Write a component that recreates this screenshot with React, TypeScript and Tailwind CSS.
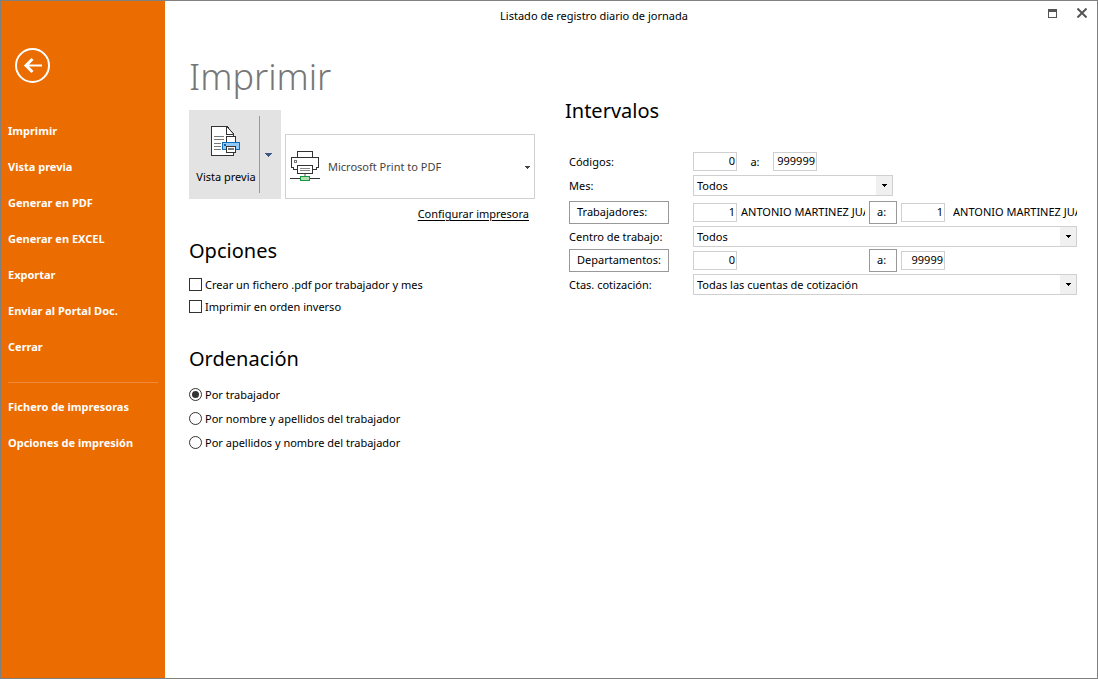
import React, { useState } from 'react';

const menuItems = [
  'Imprimir',
  'Vista previa',
  'Generar en PDF',
  'Generar en EXCEL',
  'Exportar',
  'Enviar al Portal Doc.',
  'Cerrar',
];

const setupItems = ['Fichero de impresoras', 'Opciones de impresión'];

const sortOptions = [
  'Por trabajador',
  'Por nombre y apellidos del trabajador',
  'Por apellidos y nombre del trabajador',
];

const PreviewIcon = () => (
  <svg width="30" height="31" viewBox="0 0 30 31" shapeRendering="crispEdges" aria-hidden="true">
    <path d="M0.5 0.5H16L22.5 8V29.5H0.5Z" fill="#fff" stroke="#333" />
    <path d="M15.5 0.5V8.5H22.5" fill="#fff" stroke="#333" />
    <path d="M16 0.5L22.5 8" fill="none" stroke="#333" shapeRendering="auto" />
    <path d="M3 10.5H13M3 13.5H13M3 17.5H10M3 20.5H10M3 23.5H10" stroke="#777" />
    <rect x="15.5" y="10.5" width="9" height="7" fill="#fff" stroke="#333" />
    <rect x="11.5" y="16.5" width="17" height="7" fill="#91c8f6" stroke="#0f6cbd" />
    <rect x="13" y="18" width="2" height="2" fill="#0f5ca8" />
    <rect x="15.5" y="20.5" width="9" height="6" fill="#fff" stroke="#333" />
    <path d="M17 23H23" stroke="#777" strokeWidth="2" />
  </svg>
);

const PrinterIcon = () => (
  <svg width="30" height="31" viewBox="0 0 30 31" shapeRendering="crispEdges" aria-hidden="true">
    <path d="M7.5 6.5V0.5H22.5V6.5" fill="#fff" stroke="#333" />
    <path d="M7.5 18.5H3.5V16.5H1.5V6.5H28.5V16.5H26.5V18.5H22.5" fill="#fff" stroke="#333" />
    <rect x="4.5" y="9.5" width="2" height="2" fill="none" stroke="#777" />
    <rect x="7.5" y="14.5" width="15" height="8" fill="#fff" stroke="#333" />
    <path d="M10 17.5H20M10 19.5H20" stroke="#888" />
    <path d="M15 23V25" stroke="#aaa" strokeWidth="2" />
    <path d="M0 27.5H30" stroke="#333" />
    <rect x="10.5" y="25.5" width="9" height="4" fill="#b5ddb8" stroke="#129a3f" />
  </svg>
);

const Caret = ({ className = '' }: { className?: string }) => (
  <svg width="5" height="3" viewBox="0 0 5 3" shapeRendering="crispEdges" className={className} aria-hidden="true">
    <path d="M0 0H5V1H4V2H3V3H2V2H1V1H0Z" fill="currentColor" />
  </svg>
);

interface ComboProps {
  id: string;
  value: string;
  className?: string;
}

const Combo = ({ id, value, className = 'w-full' }: ComboProps) => (
  <div className={`relative h-[21px] ${className}`}>
    <select id={id} className="block h-full w-full appearance-none border border-[#d0d0d0] bg-white pl-[3px] pr-5 pt-px">
      <option>{value}</option>
    </select>
    <span className="pointer-events-none absolute inset-y-px right-px flex w-4 items-center justify-center bg-[#f0f0f0]">
      <Caret />
    </span>
  </div>
);

interface NumberBoxProps {
  id?: string;
  label?: string;
  value: string;
}

const NumberBox = ({ id, label, value }: NumberBoxProps) => (
  <input
    id={id}
    aria-label={label}
    defaultValue={value}
    className="h-[19px] w-11 shrink-0 border border-[#d0d0d0] bg-white pb-px pr-px text-right"
  />
);

const RangeButton = ({ children, className }: { children: React.ReactNode; className: string }) => (
  <button className={`h-[23px] shrink-0 border border-[#999] bg-white text-left ${className}`}>{children}</button>
);

const Row = ({ label, children }: { label: React.ReactNode; children: React.ReactNode }) => (
  <div className="flex h-6 items-center">
    <div className="w-[124px] shrink-0">{label}</div>
    <div className="flex min-w-0 flex-1 items-center gap-1">{children}</div>
  </div>
);

const FieldLabel = ({ htmlFor, children }: { htmlFor: string; children: React.ReactNode }) => (
  <label htmlFor={htmlFor} className="block pt-0.5">{children}</label>
);

const App = () => {
  const [sort, setSort] = useState(0);

  return (
    <div className="flex min-h-screen border border-[#808080] bg-white font-['Noto_Sans','Open_Sans',sans-serif] text-[11px] leading-4 text-black">
      {/* Backstage menu */}
      <nav className="w-[164px] shrink-0 bg-[#eb6c00] px-[7px] pt-[47px] font-bold text-white">
        <button aria-label="Volver" className="ml-[7px] block">
          <svg width="35" height="35" viewBox="0 0 35 35" fill="none" stroke="#fff" aria-hidden="true">
            <circle cx="17.5" cy="17.5" r="16.5" strokeWidth="2" />
            <path d="M27 17.5H10.5" strokeWidth="2" />
            <path d="M17.5 11L11 17.5L17.5 24" strokeWidth="3" />
          </svg>
        </button>
        <div className="mt-[30px]">
          {menuItems.map((item) => (
            <button key={item} className="block h-9 w-full text-left">{item}</button>
          ))}
        </div>
        <hr className="mb-[6px] mt-[17px] border-[#f0893a]" />
        {setupItems.map((item) => (
          <button key={item} className="block h-9 w-full text-left">{item}</button>
        ))}
      </nav>

      <div className="min-w-0 flex-1">
        <header className="flex h-[30px] items-center">
          <h1 className="flex-1 text-center">Listado de registro diario de jornada</h1>
          <div className="flex w-[74px] items-center justify-end gap-5 pb-1.5 pr-[10px] text-[#555]">
            <button aria-label="Maximizar">
              <svg width="9" height="9" viewBox="0 0 9 9" shapeRendering="crispEdges">
                <path d="M0.5 0.5H8.5V8.5H0.5Z" fill="none" stroke="currentColor" />
                <path d="M0 0H9V3H0Z" fill="currentColor" />
              </svg>
            </button>
            <button aria-label="Cerrar ventana">
              <svg width="10" height="10" viewBox="0 0 10 10">
                <path d="M0.5 0.5L9.5 9.5M9.5 0.5L0.5 9.5" stroke="currentColor" strokeWidth="2" />
              </svg>
            </button>
          </div>
        </header>

        <main className="flex gap-[30px] pl-6 pr-5">
          <div className="w-[346px] shrink-0">
            <h2 className="mt-6 text-4xl font-light leading-[44px] text-[#777]">Imprimir</h2>

            <div className="mt-[11px] flex items-end gap-1">
              <div className="flex h-[89px] w-[92px] bg-[#e3e3e3]">
                <button className="flex w-[70px] flex-col items-center pl-1 pt-4">
                  <PreviewIcon />
                  <span className="mt-3 whitespace-nowrap">Vista previa</span>
                </button>
                <button
                  aria-label="Más opciones de vista previa"
                  className="my-[6px] flex flex-1 items-center justify-center border-l border-[#999] pr-1 text-[#41578a]"
                >
                  <svg width="7" height="4" viewBox="0 0 7 4" shapeRendering="crispEdges">
                    <path d="M0 0H7V1H6V2H5V3H4V4H3V3H2V2H1V1H0Z" fill="currentColor" />
                  </svg>
                </button>
              </div>
              <div className="relative h-[65px] flex-1">
                <select
                  aria-label="Impresora"
                  className="h-full w-full appearance-none border border-[#d0d0d0] bg-white pl-[42px] text-[#444]"
                >
                  <option>Microsoft Print to PDF</option>
                </select>
                <span className="pointer-events-none absolute inset-y-0 left-[5px] flex items-center">
                  <PrinterIcon />
                </span>
                <Caret className="pointer-events-none absolute right-[5px] top-8 text-[#444]" />
              </div>
            </div>
            <div className="mt-[7px] pr-[6px] text-right">
              <a href="#configurar" className="underline underline-offset-2">Configurar impresora</a>
            </div>

            <h3 className="mt-[15px] text-xl leading-7">Opciones</h3>
            <div className="mt-2">
              {['Crear un fichero .pdf por trabajador y mes', 'Imprimir en orden inverso'].map((text) => (
                <label key={text} className="flex h-[22px] items-center gap-[3px]">
                  <input type="checkbox" className="size-[13px] appearance-none border border-[#333] bg-white checked:bg-[#333]" />
                  <span className="pt-0.5">{text}</span>
                </label>
              ))}
            </div>

            <h3 className="mt-7 text-xl leading-7">Ordenación</h3>
            <div className="mt-[9px]">
              {sortOptions.map((text, i) => (
                <label key={text} className="flex h-6 items-center gap-[3px]">
                  <input
                    type="radio"
                    name="orden"
                    checked={sort === i}
                    onChange={() => setSort(i)}
                    className="size-[13px] appearance-none rounded-full border border-[#333] bg-white bg-clip-content p-[2px] checked:bg-[#333]"
                  />
                  <span className="pt-0.5">{text}</span>
                </label>
              ))}
            </div>
          </div>

          <div className="min-w-0 flex-1">
            <h3 className="mt-[66px] text-xl leading-7">Intervalos</h3>
            <div className="mt-6 pl-1">
              <Row label={<FieldLabel htmlFor="codigos">Códigos:</FieldLabel>}>
                <NumberBox id="codigos" value="0" />
                <span className="w-7 pt-0.5 text-center">a:</span>
                <NumberBox label="Código final" value="999999" />
              </Row>
              <Row label={<FieldLabel htmlFor="mes">Mes:</FieldLabel>}>
                <Combo id="mes" value="Todos" className="w-[200px]" />
              </Row>
              <div className="mt-[3px]">
                <Row label={<RangeButton className="w-[100px] px-[7px]">Trabajadores:</RangeButton>}>
                  <NumberBox label="Trabajador inicial" value="1" />
                  <span className="min-w-0 flex-1 overflow-hidden whitespace-nowrap">ANTONIO MARTINEZ JUA</span>
                  <RangeButton className="w-7 px-[7px]">a:</RangeButton>
                  <NumberBox label="Trabajador final" value="1" />
                  <span className="ml-1 min-w-0 flex-1 overflow-hidden whitespace-nowrap">ANTONIO MARTINEZ JUA</span>
                </Row>
                <Row label={<FieldLabel htmlFor="centro">Centro de trabajo:</FieldLabel>}>
                  <Combo id="centro" value="Todos" />
                </Row>
                <Row label={<RangeButton className="w-[100px] px-[7px]">Departamentos:</RangeButton>}>
                  <NumberBox label="Departamento inicial" value="0" />
                  <span className="flex-1" />
                  <RangeButton className="w-7 px-[7px]">a:</RangeButton>
                  <NumberBox label="Departamento final" value="99999" />
                  <span className="ml-1 flex-1" />
                </Row>
                <Row label={<FieldLabel htmlFor="ctas">Ctas. cotización:</FieldLabel>}>
                  <Combo id="ctas" value="Todas las cuentas de cotización" />
                </Row>
              </div>
            </div>
          </div>
        </main>
      </div>
    </div>
  );
};

export default App;
